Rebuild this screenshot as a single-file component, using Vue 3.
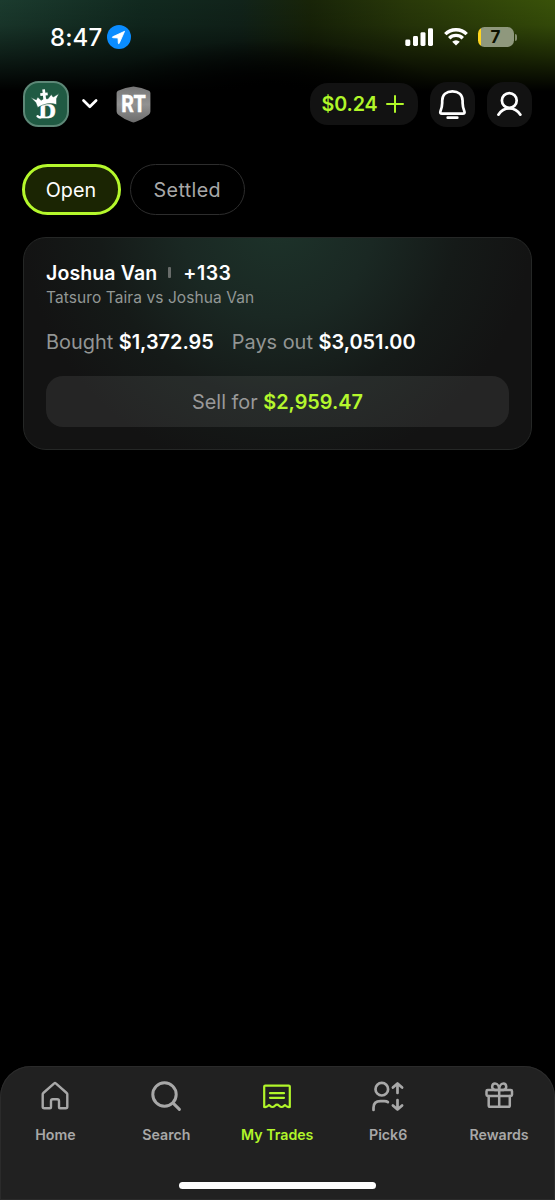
<script setup>
const tabs = [
  { label: 'Home', icon: 'home' },
  { label: 'Search', icon: 'search' },
  { label: 'My Trades', icon: 'trades', active: true },
  { label: 'Pick6', icon: 'pick' },
  { label: 'Rewards', icon: 'gift' },
]
</script>

<template>
  <div class="screen">
    <div class="status">
      <span class="time">8:47</span>
      <svg class="loc" width="24" height="24" viewBox="0 0 24 24">
        <circle cx="12" cy="12" r="12" fill="#0a8cff" />
        <path d="M17.6 6.3 5.6 11.8q-.7.6.2.9l5.2.3.3 5.2q.3.9.9.2z" fill="#fff" stroke="#fff" stroke-width=".8" stroke-linejoin="round" />
      </svg>
      <svg class="signal" width="29" height="19" viewBox="0 0 29 19" fill="#fff">
        <rect x="0.3" y="11.5" width="5" height="6.5" rx="1.4" />
        <rect x="8" y="8" width="5" height="10" rx="1.4" />
        <rect x="15.5" y="4.2" width="5" height="13.8" rx="1.4" />
        <rect x="23" y="0.2" width="5" height="17.8" rx="1.4" />
      </svg>
      <svg class="wifi" width="24" height="18" viewBox="0 0 24 18" fill="none" stroke="#fff" stroke-width="3.4">
        <path d="M1.3 6.1a15.2 15.2 0 0 1 21.4 0" />
        <path d="M5.2 10.2a9.7 9.7 0 0 1 13.6 0" />
        <path d="M12 17.6 8.2 13.7a5.5 5.5 0 0 1 7.6 0z" fill="#fff" stroke="none" />
      </svg>
      <div class="battery"><span>7</span></div>
      <i class="nub"></i>
    </div>

    <header class="top">
      <div class="brand">
        <svg width="46" height="46" viewBox="0 0 46 46">
          <rect x="1" y="1" width="44" height="44" rx="14.5" fill="#205a43" stroke="#5d8877" stroke-width="2" />
          <text x="15.500" y="37" class="logo-d" textLength="17.500" lengthAdjust="spacingAndGlyphs">D</text>
          <path d="M19.300 27v7.500q-1.300 3.300-4.700.8" fill="none" stroke="#fff" stroke-width="2.400" stroke-linecap="round" />
          <path d="M14.700 26.600 12.600 21.200 7.700 16.600 13.300 18.800 14.700 16 18.100 19.300 21 17.600 25 17.700 28.200 13.400 30.200 16 36 12.600 33.600 17.600 33.600 23.600Q24 20.600 14.700 26.600z" fill="#fff" stroke="#205a43" stroke-width=".6" />
          <path d="M20.600 8.300 21.800 19M17.300 13.700l7.400-.9" fill="none" stroke="#fff" stroke-width="2.700" />
        </svg>
      </div>
      <svg class="chev" width="18" height="12" viewBox="0 0 18 12" fill="none" stroke="#fff" stroke-width="2.7" stroke-linecap="round" stroke-linejoin="round"><path d="m2.500 2.500 6.300 6.300L15.100 2.500" /></svg>
      <svg class="shield" width="35" height="37" viewBox="0 0 35 37">
        <defs><linearGradient id="metal" x1="0" y1="0" x2="0" y2="1"><stop offset="0" stop-color="#777" /><stop offset=".5" stop-color="#929292" /><stop offset="1" stop-color="#6c6c6c" /></linearGradient></defs>
        <path d="M17.500.4q8.200.8 15.500 4.400 1.400.8 1.400 2.300v18.400q0 2-1.700 3.300-6 4.800-13.400 7.300-1.800.7-3.600 0Q8.300 33.600 2.300 28.800.6 27.500.6 25.500V7.100Q.6 5.600 2 4.800 9.300 1.200 17.500.4z" fill="url(#metal)" />
        <text x="5.200" y="26.200" class="rt" textLength="24.500" lengthAdjust="spacingAndGlyphs">RT</text>
      </svg>
      <div class="wallet">
        <span>$0.24</span>
        <svg width="18" height="18" viewBox="0 0 18 18" stroke="#b0f629" stroke-width="2" stroke-linecap="round"><path d="M9 1v16M1 9h16" /></svg>
      </div>
      <div class="round">
        <svg width="45" height="45" viewBox="0 0 45 45" fill="none" stroke="#fff" stroke-width="2.700" stroke-linejoin="round" stroke-linecap="round">
          <path d="M12 31.700q-2.300 0-1.600-2.200 1.800-4.300 1.800-8.400v-2.300c0-6 4.400-9.400 10.200-9.400s10.200 3.400 10.200 9.400v2.300q0 4.100 1.800 8.400.7 2.200-1.600 2.200zM17.700 35.700h9.600" />
        </svg>
      </div>
      <div class="round">
        <svg width="45" height="45" viewBox="0 0 45 45" fill="none" stroke="#fff" stroke-width="2.700" stroke-linecap="round">
          <circle cx="22.300" cy="18.500" r="7.400" /><path d="M11.400 32.700Q15.300 26.300 22.300 26.300T33.400 32.700" />
        </svg>
      </div>
    </header>

    <div class="filters">
      <div class="pill on">Open</div>
      <div class="pill">Settled</div>
    </div>

    <section class="card">
      <div class="title"><b class="name">Joshua Van</b><i class="bar"></i><b class="odds">+133</b></div>
      <div class="sub">Tatsuro Taira vs Joshua Van</div>
      <div class="amounts">
        <span>Bought <b>$1,372.95</b></span>
        <span>Pays out <b>$3,051.00</b></span>
      </div>
      <div class="sell"><span>Sell for <b>$2,959.47</b></span></div>
    </section>

    <nav class="nav">
      <div v-for="t in tabs" :key="t.label" class="tab" :class="{ active: t.active }">
        <svg width="40" height="36" viewBox="0 0 40 36" fill="none" stroke="currentColor" stroke-width="2.400" stroke-linejoin="round" stroke-linecap="round">
          <path v-if="t.icon === 'home'" d="M9.200 31.300q-1.500 0-1.500-1.500V17.200q0-.7.600-1.200L19.200 6.300q.8-.8 1.600 0L31.700 16q.6.500.6 1.200v12.600q0 1.500-1.500 1.500H25q-1 0-1-1V24q0-1.700-1.700-1.700h-4.600q-1.700 0-1.700 1.700v6.300q0 1-1 1z" />
          <g v-else-if="t.icon === 'search'" stroke-width="3"><circle cx="18.500" cy="17.500" r="11.700" /><path d="m27.100 26.100 6.300 6.300" /></g>
          <g v-else-if="t.icon === 'trades'" stroke-width="2.200">
            <path d="M7.200 30V9.600q0-1 1-1h23.600q1 0 1 1V30q-2 .5-3.900-1.300-.9-.9-1.900 0-2.400 2.600-4.900 0-2.100-2-4.200 0-2.500 2.600-4.900 0-1-.9-1.900 0Q9.200 30.500 7.200 30z" /><path d="M13 16.200h14M13 20.800h14" />
          </g>
          <g v-else-if="t.icon === 'pick'" stroke-width="2.700">
            <circle cx="13.800" cy="12.200" r="6.300" /><path d="M5.500 33v-2.200q0-6.600 7-6.600h3.800q2.500 0 3.600.9" />
            <path d="M29.500 16V6.500m-4.600 4.100 4.600-4.200 4.600 4.200M29.500 23v9.500m-4.600-4.100 4.600 4.200 4.600-4.200" />
          </g>
          <g v-else stroke-width="2.500">
            <rect x="7.500" y="13" width="25.500" height="6" rx="1.200" /><path d="M9.700 19v9.500q0 1.300 1.300 1.300h18.500q1.300 0 1.300-1.300V19M20.200 13v16.800" />
            <path d="M20.200 13h-4.300c-4.200-1-3.100-6.500.1-6.500 2.900 0 4.200 3.500 4.200 6.500zm0 0h4.300c4.200-1 3.100-6.500-.1-6.500-2.900 0-4.200 3.500-4.200 6.500z" />
          </g>
        </svg>
        <span>{{ t.label }}</span>
      </div>
      <i class="home-bar"></i>
    </nav>
  </div>
</template>

<style>
html, body { margin: 0; background: #000; }
</style>

<style scoped>
.screen {
  width: 555px; height: 1200px; box-sizing: border-box; overflow: hidden;
  display: flex; flex-direction: column; color: #fff;
  font-family: Inter, "Liberation Sans", sans-serif;
  background:
    linear-gradient(180deg, transparent 0, rgba(0, 0, 0, .12) 25px, rgba(0, 0, 0, .5) 55px, #000 91px) no-repeat 0 0 / 100% 110px,
    radial-gradient(ellipse 170px 52px at 270px 92px, #000 15%, transparent 100%),
    linear-gradient(90deg, #1b3b2e 0, #11291f 140px, #11231a 240px, #182408 310px, #293909 410px, #395209 555px) no-repeat 0 0 / 100% 95px,
    #000;
}
.status { height: 74px; display: flex; align-items: center; box-sizing: border-box; padding-left: 50px; }
.time { width: 57px; font-size: 24px; font-weight: 500; letter-spacing: .1px; white-space: nowrap; }
.signal { margin-left: 274px; }
.wifi { margin-left: 10px; }
.battery {
  margin-left: 10px; width: 36px; height: 20px; border-radius: 6.500px; color: #0c1000;
  background: linear-gradient(90deg, #ffd51e 2.500px, #8f987d 2.500px);
  display: flex; align-items: center; justify-content: center; font-weight: 700; font-size: 17px;
}
.battery span { margin-right: 1px; }
.nub { width: 2px; height: 7px; margin-left: 1px; border-radius: 0 3px 3px 0; background: #858e70; }
.top { height: 60px; display: flex; align-items: center; padding: 0 23.500px 0 22.500px; }
.brand { width: 46px; height: 46px; }
.brand svg, .round svg { display: block; }
.logo-d { font: 700 20px "Liberation Serif", serif; fill: #fff; stroke: #fff; stroke-width: .5px; }
.chev { margin-left: 12px; }
.shield { margin-left: 17px; }
.rt { font: 800 23.500px Roboto, sans-serif; fill: #fff; stroke: #fff; stroke-width: .3px; }
.wallet {
  margin-left: auto; width: 107.500px; height: 42px; border-radius: 18px; background: #121212;
  box-sizing: border-box; padding-left: 11.500px; display: flex; align-items: center; gap: 9px;
  color: #b0f629; font-size: 19.700px; font-weight: 600; letter-spacing: -.1px;
}
.wallet span { width: 55.500px; }
.round { margin-left: 12px; width: 45px; height: 45px; border-radius: 17px; background: #121212; }
.filters { display: flex; gap: 9.500px; padding: 29.500px 21.500px 0; }
.pill {
  width: 114.500px; height: 51px; box-sizing: border-box; border: 1.500px solid #2d2d2d; border-radius: 26px; padding-top: 1px;
  display: flex; align-items: center; justify-content: center; font-size: 19.700px; letter-spacing: .35px; color: #a8a8a8;
}
.on { width: 99px; border: 3px solid #b5f82c; background: #1b2503; color: #fff; letter-spacing: .1px; }
.card {
  margin: 22px 23px 0; height: 213px; box-sizing: border-box; border: 1px solid #252726; border-radius: 23px;
  padding: 22px 22px 0; display: flex; flex-direction: column;
  background: radial-gradient(circle 255px at 50% -18px, #1d332a 0, #1a2823 38%, #151a18 70%, #131313 100%);
}
.title { display: flex; align-items: center; height: 26px; font-size: 19.500px; letter-spacing: .12px; }
.title b, .amounts b, .sell b { font-weight: 600; }
.odds { letter-spacing: .5px; }
.bar { width: 3px; height: 11px; background: #686c6a; margin: 0 12px 0 11px; border-radius: 1px; }
.sub { font-size: 15.500px; line-height: 23px; color: #929795; letter-spacing: .08px; white-space: nowrap; }
.amounts { display: flex; gap: 18px; margin-top: 19px; font-size: 19.900px; line-height: 28px; color: #929594; white-space: nowrap; }
.amounts b { color: #fff; }
.sell {
  margin-top: 20px; height: 51px; border-radius: 17px; background: rgba(255, 255, 255, .078); box-sizing: border-box; padding-top: 1px;
  display: flex; align-items: center; justify-content: center; color: #999; font-size: 19.850px;
}
.sell b { color: #b5f72d; }
.nav {
  margin-top: auto; height: 134px; box-sizing: border-box; position: relative;
  box-shadow: inset 0 0 0 1px #2b2b2b; border-radius: 31px 31px 0 0;
  background: #212121; display: grid; grid-template-columns: repeat(5, 1fr); align-items: start; padding: 11px .500px 0 0;
}
.tab { display: flex; flex-direction: column; align-items: center; gap: 12px; color: #a8a8a8; }
.tab span { font-size: 14.200px; font-weight: 600; line-height: 20px; letter-spacing: 0; white-space: nowrap; }
.active { color: #b1f52a; }
.home-bar { position: absolute; left: 179px; bottom: 11px; width: 197px; height: 7px; border-radius: 4px; background: #fff; }
</style>
